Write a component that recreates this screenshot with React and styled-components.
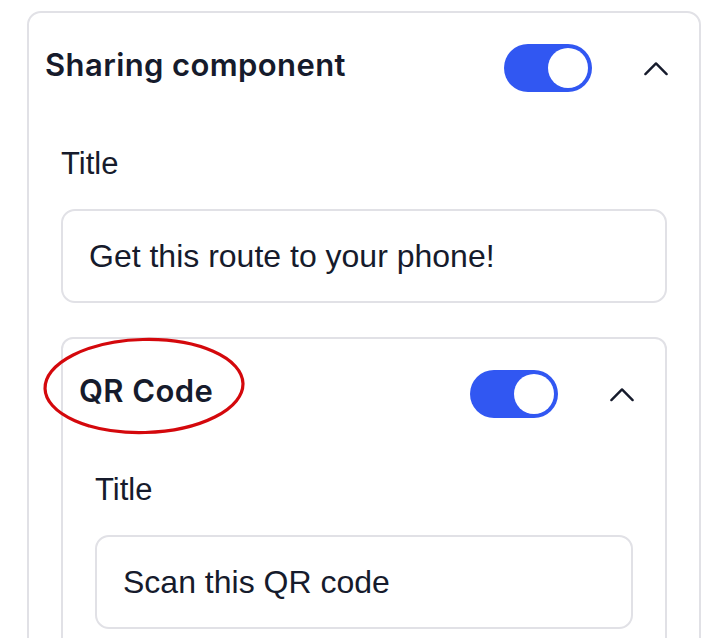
import React from 'react';
import styled, { createGlobalStyle } from 'styled-components';

const color = {
  ink: '#161b2c',
  border: '#e1e1e6',
  blue: '#3157f2',
  mark: '#d4080c',
};

const GlobalStyle = createGlobalStyle`
  html, body {
    margin: 0;
    padding: 0;
    background: #fff;
    overflow: hidden;
  }
  body {
    font-family: "Liberation Sans", Arial, sans-serif;
    color: ${color.ink};
  }
`;

const Page = styled.div`
  padding: 11px 21px 0 27px;
`;

const Card = styled.section`
  border: 2px solid ${color.border};
  border-radius: ${props => (props.nested ? '12px' : '14px')};
  background: #fff;
  margin-top: ${props => (props.nested ? '34px' : '0')};
  padding-bottom: 40px;
`;

const Header = styled.div`
  display: flex;
  align-items: center;
  height: 48px;
  padding: 31px 31px 0 16px;
`;

const Heading = styled.h2`
  margin: 0;
  padding-bottom: 8px;
  flex: 1;
  font-family: Inter, "Liberation Sans", sans-serif;
  font-weight: 600;
  font-size: 31px;
  line-height: 1;
  letter-spacing: 0.4px;
  color: ${color.ink};
`;

const HeadingText = styled.span`
  position: relative;
  display: inline-block;
`;

// hand-drawn circle around a heading
const Marker = styled.svg`
  position: absolute;
  left: -36px;
  top: -38px;
  width: 202px;
  height: 98px;
  overflow: visible;
  pointer-events: none;
`;

const Switch = styled.button`
  position: relative;
  width: 88px;
  height: 48px;
  border: none;
  border-radius: 24px;
  padding: 0;
  background: ${props => (props.on ? color.blue : '#d3d5dc')};
  cursor: pointer;

  &::after {
    content: '';
    position: absolute;
    top: 4px;
    left: ${props => (props.on ? '44px' : '4px')};
    width: 40px;
    height: 40px;
    border-radius: 50%;
    background: #fff;
  }
`;

const Chevron = styled.button`
  display: flex;
  align-items: center;
  justify-content: center;
  width: 24px;
  height: 24px;
  margin-left: 52px;
  padding: 0;
  border: none;
  background: none;
  color: ${color.ink};
`;

const Body = styled.div`
  padding: 0 32px;
`;

const Label = styled.label`
  display: block;
  margin-top: 52px;
  font-size: 31px;
  line-height: 40px;
`;

const Input = styled.input`
  display: block;
  box-sizing: border-box;
  width: 100%;
  height: 94px;
  margin-top: 25px;
  padding: 0 26px;
  border: 2px solid ${color.border};
  border-radius: 14px;
  font-family: "Liberation Sans", Arial, sans-serif;
  font-size: 32px;
  color: ${color.ink};
  outline: none;
`;

function ChevronUp() {
  return (
    <svg width="26" height="15" viewBox="0 0 26 15" fill="none">
      <path d="M1.5 13.5 13 2l11.5 11.5" stroke="currentColor" strokeWidth="2.6" strokeLinecap="round" strokeLinejoin="round" />
    </svg>
  );
}

function Section({ title, circled, fieldValue, nested, children }) {
  return (
    <Card nested={nested}>
      <Header>
        <Heading>
          <HeadingText>
            {title}
            {circled && (
              <Marker viewBox="0 0 202 98">
                <ellipse cx="101" cy="49" rx="99" ry="46.5" fill="none" stroke={color.mark} strokeWidth="3.2" transform="rotate(-1.5 101 49)" />
              </Marker>
            )}
          </HeadingText>
        </Heading>
        <Switch on aria-label="toggle" />
        <Chevron aria-label="collapse">
          <ChevronUp />
        </Chevron>
      </Header>
      <Body>
        <Label>Title</Label>
        <Input defaultValue={fieldValue} />
        {children}
      </Body>
    </Card>
  );
}

export default function App() {
  return (
    <Page>
      <GlobalStyle />
      <Section title="Sharing component" fieldValue="Get this route to your phone!">
        <Section nested circled title="QR Code" fieldValue="Scan this QR code" />
      </Section>
    </Page>
  );
}
